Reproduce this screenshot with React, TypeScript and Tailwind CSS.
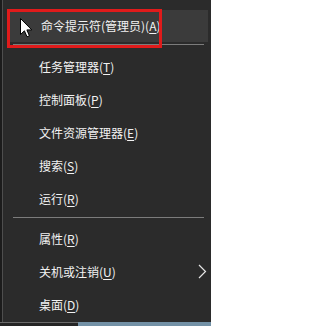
import React from "react";

type Item = { label: string; key: string; sub?: boolean };

const group1: Item[] = [
    { label: "任务管理器", key: "T" },
    { label: "控制面板", key: "P" },
    { label: "文件资源管理器", key: "E" },
    { label: "搜索", key: "S" },
    { label: "运行", key: "R" },
];

const group2: Item[] = [
    { label: "属性", key: "R" },
    { label: "关机或注销", key: "U", sub: true },
    { label: "桌面", key: "D" },
];

function Label({ label, hotkey }: { label: string; hotkey: string }) {
    return (
        <span className="whitespace-nowrap">
            {label}(<span className="underline underline-offset-2">{hotkey}</span>)
        </span>
    );
}

function MenuRow({ item }: { item: Item }) {
    return (
        <div className="flex h-[33px] items-center justify-between pl-[36px] pr-[3px]">
            <Label label={item.label} hotkey={item.key} />
            {item.sub && (
                <svg width="9" height="15" viewBox="0 0 9 15" className="mr-[1px]">
                    <polyline
                        points="1,1 7.5,7.5 1,14"
                        fill="none"
                        stroke="#e6e6e6"
                        strokeWidth="1.2"
                    />
                </svg>
            )}
        </div>
    );
}

function Separator() {
    return <div className="ml-[10px] mr-[7px] h-px bg-[#7c7c7c]" />;
}

export default function App() {
    return (
        <div
            className="relative flex h-[326px] w-[211px] flex-col overflow-hidden bg-[#2b2b2b] text-[12px] text-[#f2f2f2]"
            style={{ fontFamily: '"Noto Sans CJK SC", "Noto Sans", sans-serif' }}
        >
            <div className="flex flex-1">
                <div className="w-[2px] bg-[#1c1c1c]" />
                <div className="w-px bg-[#4e4e4e]" />
                <div className="flex flex-1 flex-col pt-[10px]">
                    <div className="ml-[5px] mr-[3px] flex h-[32px] items-center bg-[#3b3b3b] pl-[33px]">
                        <span className="whitespace-nowrap">
                            命令提示符(管理员)(<span className="underline underline-offset-2">A</span>)
                        </span>
                    </div>
                    <div className="mt-[2px]">
                        <Separator />
                    </div>
                    <div className="flex flex-col pt-[5px]">
                        {group1.map((item) => (
                            <MenuRow key={item.label} item={item} />
                        ))}
                    </div>
                    <div className="mt-[2px]">
                        <Separator />
                    </div>
                    <div className="flex flex-col pt-[4px]">
                        {group2.map((item) => (
                            <MenuRow key={item.label} item={item} />
                        ))}
                    </div>
                </div>
            </div>

            {/* desktop / taskbar peeking below */}
            <div className="flex h-[4px]">
                <div className="w-[78px] border-t border-[#6a6a6a] bg-[#252525]" />
                <div className="flex-1 bg-[#7391a6]" />
            </div>

            {/* red annotation box */}
            <div className="pointer-events-none absolute left-[7px] top-[9px] h-[39px] w-[155px] border-[3px] border-[#e01b1b]" />

            {/* mouse cursor */}
            <svg
                className="pointer-events-none absolute left-[20px] top-[18px]"
                width="13"
                height="20"
                viewBox="0 0 13 20"
            >
                <path
                    d="M0.5 0.5 L0.5 16.5 L4.4 12.8 L7 18.8 L9.4 17.8 L6.9 11.9 L11.8 11.9 Z"
                    fill="#ffffff"
                    stroke="#000000"
                    strokeWidth="1"
                />
            </svg>
        </div>
    );
}
